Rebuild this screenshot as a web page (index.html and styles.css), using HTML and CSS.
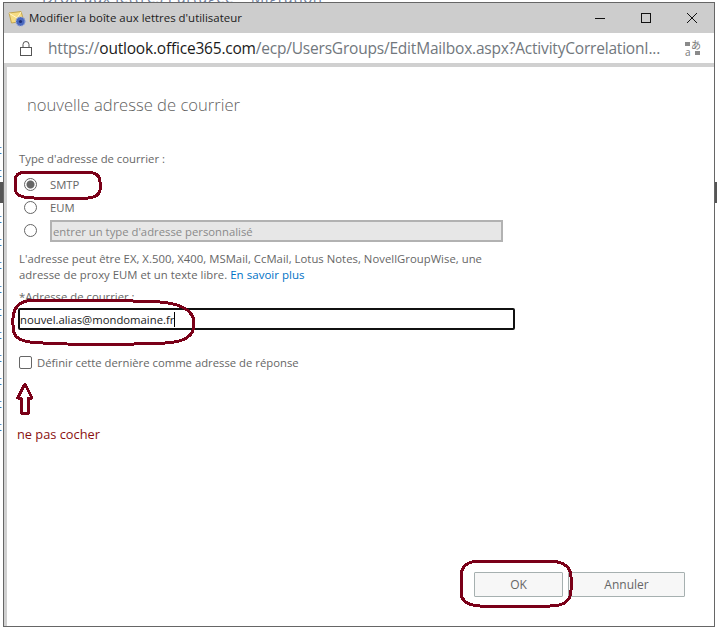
FILE: index.html
```html
<!DOCTYPE html>
<html lang="fr">
<head>
<meta charset="utf-8">
<title>Modifier la boîte aux lettres d'utilisateur</title>
<link rel="stylesheet" href="styles.css">
</head>
<body>
<div class="desktop">
  <div class="behind-top">Droit aux lettres Partagée – Migration</div>
  <div class="behind-left">
    <span>t</span><span>t</span><span>t</span><span>t</span><span>t</span><span>t</span><span>t</span><span>t</span><span>t</span><span>t</span><span>t</span><span>t</span><span>t</span>
  </div>
  <div class="behind-dark left"></div>
  <div class="behind-dark right"></div>

  <div class="window">
    <header class="titlebar">
      <svg class="app-icon" width="22" height="20" viewBox="0 0 22 20">
        <path d="M1 5 L13 3.500 L16 13 L3.500 15 Z" fill="#f6dc82" stroke="#c4a650" stroke-width="1"/>
        <path d="M1.500 5.500 L9 10 L13 4" fill="none" stroke="#fff6cf" stroke-width="1"/>
        <circle cx="12.500" cy="13.500" r="4.500" fill="#4a68bd"/>
        <circle cx="12.500" cy="13.500" r="4.500" fill="none" stroke="#8ba0de" stroke-width="1.200" stroke-dasharray="1.200 1.200"/>
        <circle cx="12.500" cy="13.500" r="1.600" fill="#1c2f78"/>
      </svg>
      <span class="title">Modifier la boîte aux lettres d'utilisateur</span>
      <div class="win-controls">
        <svg width="12" height="12" viewBox="0 0 12 12"><path d="M1 6.500H11" stroke="#111" fill="none"/></svg>
        <svg width="12" height="12" viewBox="0 0 12 12"><rect x="1.500" y="1.500" width="9" height="9" stroke="#111" fill="none"/></svg>
        <svg width="12" height="12" viewBox="0 0 12 12"><path d="M1 1L11 11M11 1L1 11" stroke="#111" fill="none"/></svg>
      </div>
    </header>

    <div class="urlbar">
      <svg class="lock" width="14" height="17" viewBox="0 0 14 17">
        <rect x="1.500" y="7.500" width="11" height="8" fill="none" stroke="#555"/>
        <path d="M4 7.500V4.500a3 3 0 0 1 6 0V7.500" fill="none" stroke="#555"/>
      </svg>
      <span class="url">https://<b class="host">outlook.office365.com</b>/ecp/UsersGroups/EditMailbox.aspx?ActivityCorrelationI...</span>
      <svg class="translate" width="18" height="17" viewBox="0 0 18 17">
        <text x="7" y="9" class="glyph-ja">あ</text>
        <text x="1" y="16" class="glyph-a">a</text>
        <path d="M1 2H6V6H1ZM11 11H16V15H11Z" fill="#8a8a8a"/>
      </svg>
    </div>

    <main class="content">
      <h1 class="heading">nouvelle adresse de courrier</h1>
      <form class="form">
        <div class="label type-label">Type d'adresse de courrier :</div>
        <label class="radio-row"><input class="radio checked" type="radio" name="t" checked><span>SMTP</span></label>
        <label class="radio-row"><input class="radio" type="radio" name="t"><span>EUM</span></label>
        <div class="radio-row custom">
          <input class="radio" type="radio" name="t">
          <input class="custom-input" type="text" disabled placeholder="entrer un type d'adresse personnalisé">
        </div>
        <p class="help">L'adresse peut être EX, X.500, X400, MSMail, CcMail, Lotus Notes, NovellGroupWise, une<br>adresse de proxy EUM et un texte libre. <a href="#">En savoir plus</a></p>
        <div class="label addr-label">*Adresse de courrier :</div>
        <div class="addr-input"><span>nouvel.alias@mondomaine.fr</span><i class="caret"></i></div>
        <label class="check-row"><span class="check"></span><span>Définir cette dernière comme adresse de réponse</span></label>
        <div class="note">ne pas cocher</div>
      </form>
      <div class="buttons">
        <button class="btn" type="button">OK</button>
        <button class="btn cancel" type="button">Annuler</button>
      </div>
    </main>
  </div>

  <svg class="marks" width="717" height="628" viewBox="0 0 717 628">
    <g fill="none" stroke="#7a0018" stroke-width="3" stroke-linejoin="round" shape-rendering="crispEdges">
      <path d="M25 172 H88 Q100 173 100 182 V190 Q99 197 88 198 H34 Q15 198 15 188 V180 Q15 173 25 172 Z"/>
      <path d="M27 301 C60 300 120 300 160 302 C185 304 193 312 194 322 C195 336 185 342 165 343 C120 345 60 345 30 342 C18 340 13 337 13 325 C12 312 16 303 27 301 Z"/>
      <path d="M478 561 H550 Q571 562 571 577 V590 Q571 606 550 606 H480 Q461 605 461 592 V575 Q462 562 478 561 Z"/>
      <path d="M25 384 L32 398 H28.500 V413 H21 V398 H17.500 Z"/>
    </g>
  </svg>
</div>
</body>
</html>
```
FILE: styles.css
```css
* { box-sizing: border-box; }
html, body { margin: 0; padding: 0; }
body { font-family: "Open Sans", "Noto Sans", sans-serif; background: #fff; }

.desktop { position: relative; width: 717px; height: 628px; overflow: hidden; background: #fff; }
.behind-top { position: absolute; left: 42px; top: -9px; font-size: 15px; line-height: 12px; color: #6f7fa0; white-space: nowrap; letter-spacing: 0.5px; }
.behind-left { position: absolute; left: -3px; top: 138px; display: flex; flex-direction: column; font-size: 13px; line-height: 23.1px; color: #3a6ea8; }
.behind-dark { position: absolute; top: 182px; height: 21px; width: 3px; background: #555; }
.behind-dark.left { left: 0; }
.behind-dark.right { right: 0; width: 2px; }

.window { position: absolute; left: 3px; top: 2px; width: 712px; height: 625px; border: 1px solid #666; background: #d0d0d0; display: flex; flex-direction: column; }

.titlebar { height: 30px; background: #cdcdcd; display: flex; align-items: center; padding-left: 4px; flex: none; }
.app-icon { flex: none; margin-top: -1px; }
.title { margin-left: -1px; font-size: 11.450px; color: #1c1c1c; white-space: nowrap; margin-top: -1px; }
.win-controls { margin-left: auto; display: flex; gap: 34px; padding-right: 16px; align-items: center; margin-top: -1px; }

.urlbar { height: 30px; background: #fff; display: flex; align-items: center; padding: 0 12px 0 15px; flex: none; }
.lock { flex: none; }
.url { margin-left: 15px; font-size: 15.500px; color: #71777d; white-space: nowrap; letter-spacing: -0.200px; }
.host { font-weight: 400; color: #1a1a1a; }
.translate { margin-left: auto; flex: none; }
.glyph-ja { font-family: "Noto Sans CJK JP", sans-serif; font-size: 10px; fill: #777; }
.glyph-a { font-family: "Open Sans", sans-serif; font-size: 10px; fill: #777; }

.content { flex: 1; margin: 4px 0 0 3px; background: #fff; display: flex; flex-direction: column; padding: 0 29px 29px 11px; color: #666; font-size: 11.300px; min-height: 0; }
.heading { margin: 27px 0 0 9px; font-size: 16.600px; line-height: 21px; font-weight: 300; color: #5f5f5f; }
.form { display: flex; flex-direction: column; }
.label { line-height: 16px; }
.type-label { margin-top: 36px; margin-left: 1px; }
.radio-row { display: flex; align-items: center; height: 23px; padding-left: 6px; }
.type-label + .radio-row { margin-top: 6px; }
.radio { appearance: none; width: 13px; height: 13px; margin: 0 13px 0 0; border: 1px solid #666; border-radius: 50%; background: #fff; flex: none; }
.radio.checked { background: radial-gradient(circle, #666 0, #666 3.500px, #fff 4.500px); }
.radio-row.custom { height: 24px; align-items: flex-start; padding-top: 0; }
.radio-row.custom .radio { margin-top: 5px; margin-right: 13px; }
.custom-input { width: 453px; height: 22px; background: #e7e7e7; border: 2px solid #b2b2b2; padding: 0 0 0 1px; font: inherit; margin: 1px 0 0 0; }
.custom-input::placeholder { color: #8a8a8a; opacity: 1; }
.help { margin: 8px 0 0 1px; line-height: 16px; letter-spacing: 0.030px; }
.help a { color: #0072c6; text-decoration: none; font-size: 11.500px; }
.addr-label { margin: 6px 0 0 1px; }
.addr-input { width: 497px; height: 22px; margin-top: 3px; border: 2px solid #111; border-radius: 2px; color: #1a1a1a; display: flex; align-items: center; padding-left: 0; }
.caret { display: inline-block; width: 1px; height: 15px; background: #000; margin-left: 0; }
.check-row { display: flex; align-items: center; margin: 24px 0 0 1px; gap: 5px; height: 16px; }
.check { width: 13px; height: 13px; border: 1px solid #666; border-radius: 2px; flex: none; background: #fff; }
.note { margin: 56px 0 0 -1px; color: #8a1010; font-size: 12.800px; line-height: 16px; }

.buttons { margin-top: auto; display: flex; justify-content: flex-end; gap: 5px; }
.btn { width: 89px; height: 25px; border: 1px solid #a6b0b0; background: #f7f7f7; color: #666; font: inherit; font-size: 12px; padding: 0; border-radius: 1px; }
.btn.cancel { width: 117px; }

.marks { position: absolute; left: 0; top: 0; pointer-events: none; }
```
